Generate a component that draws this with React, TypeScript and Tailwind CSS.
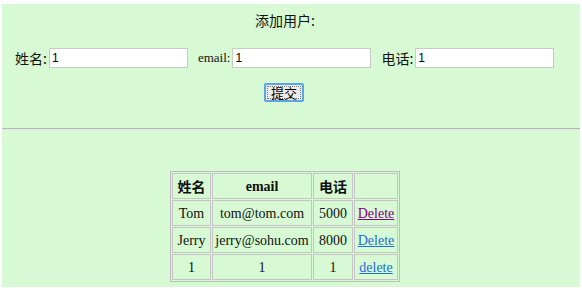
import React from "react";

const rows = [
  { name: "Tom", email: "tom@tom.com", tel: "5000", action: "Delete", visited: true },
  { name: "Jerry", email: "jerry@sohu.com", tel: "8000", action: "Delete", visited: false },
  { name: "1", email: "1", tel: "1", action: "delete", visited: false },
];

const cjk = "font-['Noto_Sans_CJK_SC','Noto_Sans',sans-serif]";
const serif = "font-['Liberation_Serif','Noto_Sans_CJK_SC',serif]";

const Field = ({ label, serifLabel }: { label: string; serifLabel?: boolean }) => (
  <div className="flex items-center">
    <span className={`${serifLabel ? `${serif} text-[13px]` : `${cjk} text-[14px]`} text-[#111] mr-[2px]`}>{label}</span>
    <input
      readOnly
      value="1"
      className="w-[139px] h-[20px] bg-white border border-[#c8cbc8] px-[2px] text-[12px] font-['Liberation_Sans',sans-serif] text-black outline-none"
    />
  </div>
);

export default function App() {
  return (
    <div className="w-[582px] h-[291px] bg-white pt-[4px] pl-[2px] pr-[2px]">
      <div className="h-[283px] bg-[#d7f9d4] flex flex-col">
        <div className={`${cjk} text-[14px] text-[#111] text-center h-[38px] pt-[6px] pr-[12px]`}>添加用户:</div>
        <div className="flex items-center pl-[13px] h-[32px]">
          <Field label="姓名:" />
          <div className="w-[10px]" />
          <Field label="email:" serifLabel />
          <div className="w-[10px]" />
          <Field label="电话:" />
        </div>
        <div className="flex justify-center pt-[9px] pr-[14px]">
          <button className={`${cjk} text-[13px] leading-none w-[40px] h-[19px] bg-[#ececec] border-2 border-[#5aa5e6] rounded-[2px] text-black outline outline-1 outline-dotted outline-[#777] -outline-offset-4`}>
            提交
          </button>
        </div>
        <div className="mt-[26px] h-[2px] bg-[#b4b8b4] border-b border-[#e6e8e6]" />
        <div className="flex justify-center pt-[41px] pr-[12px]">
          <table className={`${serif} border border-[#bcbcbc] border-separate border-spacing-[1px] text-[14px] text-[#111]`}>
            <thead>
              <tr className="h-[26px]">
                <th className={`${cjk} border border-[#c4c4c4] w-[39px] text-[14px] font-bold`}>姓名</th>
                <th className="border border-[#c4c4c4] w-[100px] text-[14px] font-bold">email</th>
                <th className={`${cjk} border border-[#c4c4c4] w-[40px] text-[14px] font-bold`}>电话</th>
                <th className="border border-[#c4c4c4] w-[44px]"></th>
              </tr>
            </thead>
            <tbody>
              {rows.map((r) => (
                <tr key={r.name + r.email} className="h-[26px]">
                  <td className="border border-[#c4c4c4] text-center">{r.name}</td>
                  <td className="border border-[#c4c4c4] text-center px-[2px]">{r.email}</td>
                  <td className="border border-[#c4c4c4] text-center">{r.tel}</td>
                  <td className="border border-[#c4c4c4] text-center px-[2px]">
                    <a href="#" className={`underline ${r.visited ? "text-[#800080]" : "text-[#1a6fd8]"}`}>{r.action}</a>
                  </td>
                </tr>
              ))}
            </tbody>
          </table>
        </div>
      </div>
    </div>
  );
}
